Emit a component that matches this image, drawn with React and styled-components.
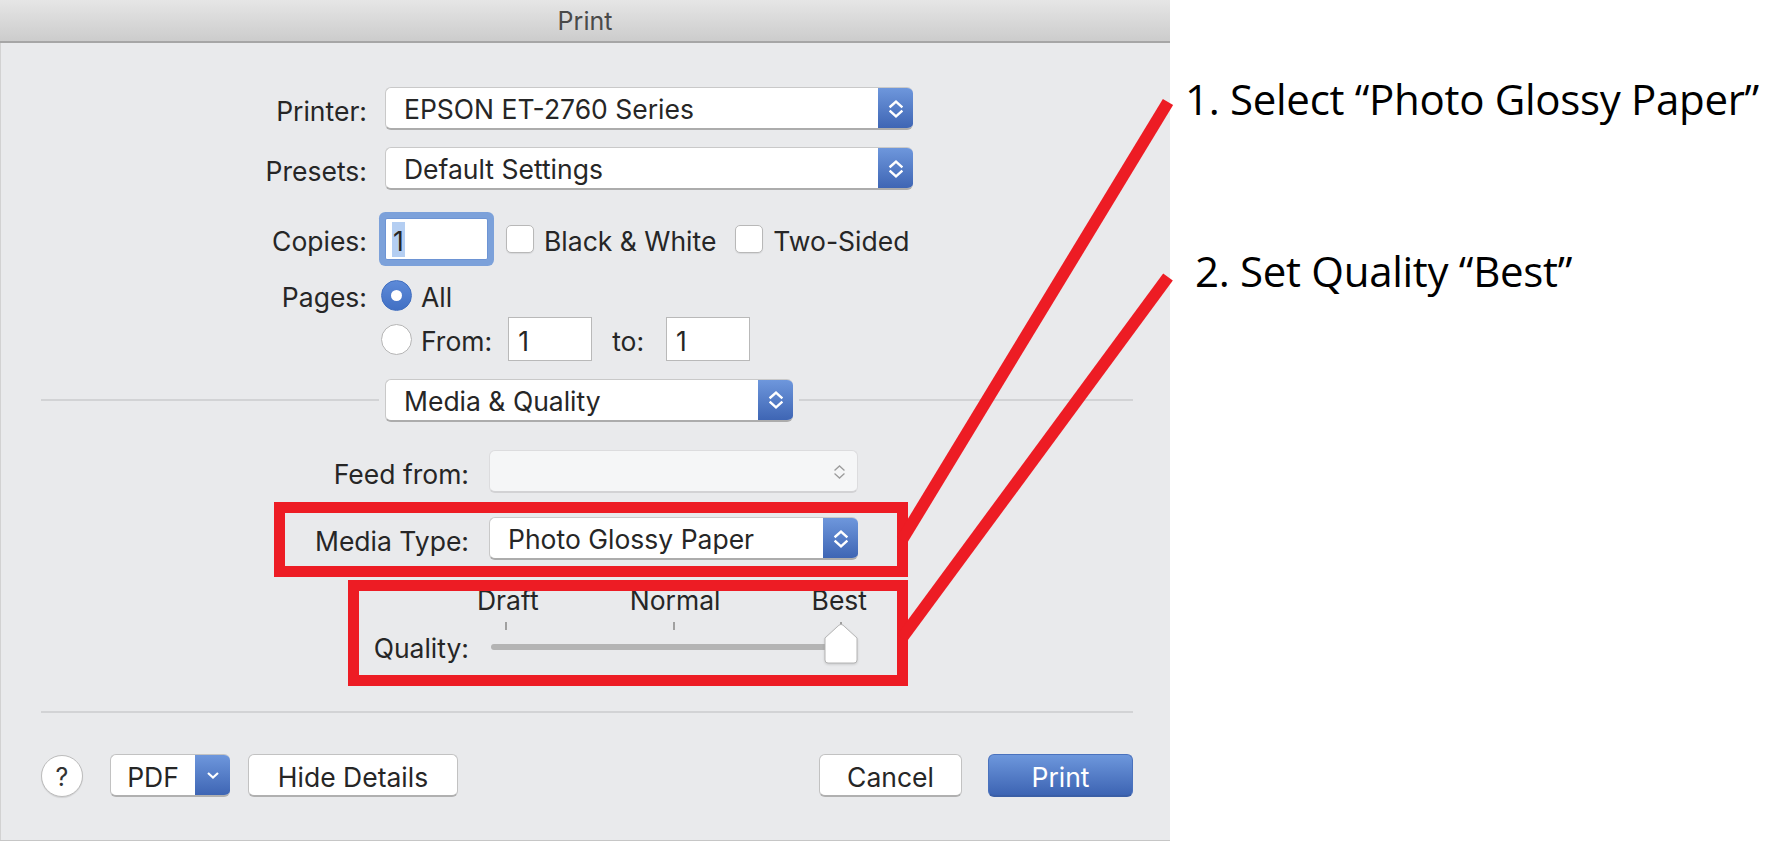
import React from 'react'
import styled, { createGlobalStyle } from 'styled-components'

// macOS print sheet with two red call-outs drawn on top of it.

const GlobalStyle = createGlobalStyle`
  html, body {
    margin: 0;
    padding: 0;
    background: #ffffff;
  }
  body {
    font-family: Inter, "Noto Sans", sans-serif;
  }
`

const RED = '#ed1c24'
const BLUE = 'linear-gradient(#6f98dd, #3c63b2)'

function UpDown({ color = '#fff', small }) {
  return (
    <svg width={small ? 13 : 16} height={small ? 22 : 22} viewBox="0 0 16 22" fill="none"
      stroke={color} strokeWidth={small ? 1.6 : 2.4} strokeLinecap="square" strokeLinejoin="miter">
      <path d="M2.5 8.5 L8 3.5 L13.5 8.5" />
      <path d="M2.5 13.5 L8 18.5 L13.5 13.5" />
    </svg>
  )
}

function ChevronDown() {
  return (
    <svg width="14" height="9" viewBox="0 0 14 9" fill="none" stroke="#fff" strokeWidth="2.2">
      <path d="M2 2 L7 6.5 L12 2" />
    </svg>
  )
}

function Popup({ width, value, disabled }) {
  return (
    <PopupBox $w={width} $disabled={disabled}>
      <PopupText>{value}</PopupText>
      <Stepper $disabled={disabled}>
        <UpDown color={disabled ? '#9c9c9c' : '#fff'} small={disabled} />
      </Stepper>
    </PopupBox>
  )
}

function App() {
  return (
    <>
      <GlobalStyle />
      <Page>
        <Dialog>
          <TitleBar>Print</TitleBar>

          <Row $label={367} $gap={18} $h={43} $top={44}>
            <Label>Printer:</Label>
            <Popup width={528} value="EPSON ET-2760 Series" />
          </Row>
          <Row $label={367} $gap={18} $h={43} $top={17}>
            <Label>Presets:</Label>
            <Popup width={528} value="Default Settings" />
          </Row>
          <Row $label={367} $gap={18} $h={42} $top={28}>
            <Label>Copies:</Label>
            <Inline>
              <FocusField>
                <Selected>1</Selected>
              </FocusField>
              <Checkbox $ml={18} />
              <Text $ml={10}>Black &amp; White</Text>
              <Checkbox $ml={19} />
              <Text $ml={10}>Two-Sided</Text>
            </Inline>
          </Row>
          <Row $label={367} $gap={14} $h={30} $top={18}>
            <Label>Pages:</Label>
            <Inline>
              <Radio $on />
              <Text $ml={9}>All</Text>
            </Inline>
          </Row>
          <Row $label={367} $gap={14} $h={44} $top={9}>
            <span />
            <Inline>
              <Radio />
              <Text $ml={9}>From:</Text>
              <Field $ml={16}>1</Field>
              <Text $ml={20}>to:</Text>
              <Field $ml={22}>1</Field>
            </Inline>
          </Row>

          <DividerRow>
            <Rule $w={338} />
            <Popup width={408} value="Media & Quality" />
            <Rule />
          </DividerRow>

          <Row $label={469} $gap={20} $h={42} $top={28}>
            <Label>Feed from:</Label>
            <Popup width={369} value="" disabled />
          </Row>
          <Row $label={469} $gap={20} $h={42} $top={25}>
            <Label>Media Type:</Label>
            <Popup width={369} value="Photo Glossy Paper" />
          </Row>
          <Row $label={469} $gap={20} $h={30} $top={26}>
            <span />
            <StopLabels>
              <span>Draft</span>
              <span>Normal</span>
              <span>Best</span>
            </StopLabels>
          </Row>
          <Row $label={469} $gap={20} $h={46} $top={4}>
            <Label $shift={8}>Quality:</Label>
            <Slider>
              <Ticks>
                <Tick />
                <Tick />
                <Tick />
              </Ticks>
              <Track />
              <Knob viewBox="0 0 34 41" width="34" height="41">
                <path d="M1 15 L15 2.2 Q17 0.6 19 2.2 L33 15 V37 Q33 40 30 40 H4 Q1 40 1 37 Z"
                  fill="#fff" stroke="#b4b4b4" strokeWidth="1" />
              </Knob>
            </Slider>
          </Row>

          <SectionRule />

          <Footer>
            <Group>
              <HelpButton>?</HelpButton>
              <PdfButton>
                <span>PDF</span>
                <PdfArrow><ChevronDown /></PdfArrow>
              </PdfButton>
              <Button $w={210} $ml={18}>Hide Details</Button>
            </Group>
            <Group>
              <Button $w={143}>Cancel</Button>
              <Button $w={145} $ml={26} $primary>Print</Button>
            </Group>
          </Footer>
        </Dialog>

        <Notes>
          <Note $pl={15} $top={75}>1. Select “Photo Glossy Paper”</Note>
          <Note $pl={25} $top={124}>2. Set Quality “Best”</Note>
        </Notes>

        <Callouts width="1768" height="843" viewBox="0 0 1768 843">
          <rect x="279.5" y="507.5" width="623" height="64" fill="none" stroke={RED} strokeWidth="11" />
          <rect x="353.5" y="585.5" width="549" height="95" fill="none" stroke={RED} strokeWidth="11" />
          <line x1="902" y1="540" x2="1168" y2="102" stroke={RED} strokeWidth="12" />
          <line x1="902" y1="638" x2="1168" y2="277" stroke={RED} strokeWidth="12" />
        </Callouts>
      </Page>
    </>
  )
}

export default App


const Page = styled.div`
  position: relative;
  display: flex;
  width: 1768px;
  height: 843px;
  overflow: hidden;
  background: #ffffff;
`

const Dialog = styled.div`
  width: 1170px;
  height: 841px;
  flex: none;
  display: flex;
  flex-direction: column;
  box-sizing: border-box;
  background: #e9eaec;
  border-bottom: 1px solid #c6c6c6;
  box-shadow: inset 1px 0 0 #d2d2d2;
  font-size: 26.5px;
  color: #262626;
`

const TitleBar = styled.div`
  height: 43px;
  flex: none;
  box-sizing: border-box;
  display: flex;
  align-items: center;
  justify-content: center;
  background: linear-gradient(#e6e6e6, #cccccc);
  border-bottom: 2px solid #a6a6a6;
  color: #4a4a4a;
  font-size: 25px;
`

const Row = styled.div`
  flex: none;
  display: grid;
  grid-template-columns: ${p => p.$label}px max-content;
  column-gap: ${p => p.$gap}px;
  align-items: center;
  height: ${p => p.$h}px;
  margin-top: ${p => p.$top}px;
`

const Label = styled.span`
  justify-self: end;
  white-space: nowrap;
  line-height: 30px;
  padding-top: 4px;
  margin-top: ${p => p.$shift || 0}px;
`

const Inline = styled.div`
  display: flex;
  align-items: center;
`

const Text = styled.span`
  margin-left: ${p => p.$ml || 0}px;
  white-space: nowrap;
  line-height: 30px;
  padding-top: 4px;
`

const PopupBox = styled.div`
  width: ${p => p.$w}px;
  height: 43px;
  box-sizing: border-box;
  display: flex;
  align-items: stretch;
  border-radius: 6px;
  overflow: hidden;
  background: ${p => (p.$disabled ? '#f5f6f7' : '#ffffff')};
  border-top: 1px solid ${p => (p.$disabled ? '#dcdcde' : '#c9c9c9')};
  border-left: 1px solid ${p => (p.$disabled ? '#dcdcde' : '#c9c9c9')};
  border-bottom: 2px solid ${p => (p.$disabled ? '#d2d2d4' : '#acacac')};
  border-right: ${p => (p.$disabled ? '1px solid #dcdcde' : 'none')};
`

const PopupText = styled.span`
  flex: 1;
  display: flex;
  align-items: center;
  padding: 2px 0 0 18px;
  white-space: nowrap;
`

const Stepper = styled.div`
  width: 35px;
  flex: none;
  display: grid;
  place-items: center;
  margin: -1px 0 -2px;
  background: ${p => (p.$disabled ? 'transparent' : BLUE)};
`

const FocusField = styled.div`
  width: 103px;
  height: 42px;
  box-sizing: border-box;
  display: flex;
  align-items: center;
  padding-left: 6px;
  background: #ffffff;
  border: 1px solid #6d94d4;
  border-radius: 2px;
  box-shadow: 0 0 0 6px #7ca1da;
`

const Selected = styled.span`
  display: inline-block;
  height: 35px;
  line-height: 38px;
  padding: 0 1px;
  background: #b4cef2;
`

const Checkbox = styled.span`
  width: 28px;
  height: 28px;
  flex: none;
  box-sizing: border-box;
  margin-left: ${p => p.$ml || 0}px;
  background: #ffffff;
  border: 1px solid #b8b8b8;
  border-radius: 5px;
  box-shadow: 0 1px 1px rgba(0, 0, 0, 0.08);
`

const Radio = styled.span`
  width: 31px;
  height: 31px;
  flex: none;
  box-sizing: border-box;
  border-radius: 50%;
  display: grid;
  place-items: center;
  background: ${p => (p.$on ? 'linear-gradient(#5d8ad8, #4170c4)' : '#ffffff')};
  border: 1px solid ${p => (p.$on ? '#416fc0' : '#b5b5b5')};

  &::after {
    content: '';
    width: 11px;
    height: 11px;
    border-radius: 50%;
    background: #ffffff;
    display: ${p => (p.$on ? 'block' : 'none')};
  }
`

const Field = styled.span`
  width: 84px;
  height: 44px;
  box-sizing: border-box;
  margin-left: ${p => p.$ml || 0}px;
  display: flex;
  align-items: center;
  padding: 3px 0 0 9px;
  background: #ffffff;
  border: 1px solid #b9b9b9;
`

const DividerRow = styled.div`
  flex: none;
  height: 44px;
  margin-top: 17px;
  padding: 0 37px 0 41px;
  display: flex;
  align-items: center;
  gap: 6px;
`

const Rule = styled.div`
  height: 2px;
  flex: ${p => (p.$w ? `0 0 ${p.$w}px` : '1')};
  background: #d2d3d5;
`

const SectionRule = styled.div`
  flex: none;
  height: 2px;
  margin: 46px 37px 0 41px;
  background: #d2d3d5;
`

const StopLabels = styled.div`
  width: 390px;
  margin-left: -12px;
  display: flex;
  justify-content: space-between;
  line-height: 30px;
`

const Slider = styled.div`
  position: relative;
  width: 367px;
  height: 46px;
  margin-left: 2px;
`

const Ticks = styled.div`
  display: flex;
  justify-content: space-between;
  padding: 3px 16px 0 14px;
`

const Tick = styled.span`
  width: 2px;
  height: 8px;
  background: #a0a0a0;
`

const Track = styled.div`
  height: 6px;
  margin: 14px 20px 0 0;
  border-radius: 3px;
  background: #b4b4b4;
`

const Knob = styled.svg`
  position: absolute;
  right: 0;
  top: 4px;
  filter: drop-shadow(0 1px 1px rgba(0, 0, 0, 0.15));
`

const Footer = styled.div`
  flex: none;
  height: 43px;
  margin-top: 41px;
  padding: 0 37px 0 41px;
  display: flex;
  align-items: center;
  justify-content: space-between;
`

const Group = styled.div`
  display: flex;
  align-items: center;
`

const HelpButton = styled.div`
  width: 42px;
  height: 42px;
  box-sizing: border-box;
  border-radius: 50%;
  display: grid;
  place-items: center;
  padding-top: 2px;
  background: #ffffff;
  border: 1px solid #bcbcbc;
  box-shadow: 0 1px 1px rgba(0, 0, 0, 0.1);
  font-size: 25px;
  color: #333;
`

const PdfButton = styled.div`
  width: 120px;
  height: 43px;
  margin-left: 27px;
  box-sizing: border-box;
  display: flex;
  align-items: stretch;
  border-radius: 6px;
  overflow: hidden;
  background: #ffffff;
  border: 1px solid #c2c2c2;
  border-right: none;
  border-bottom: 2px solid #b0b0b0;

  & > span {
    flex: 1;
    display: grid;
    place-items: center;
    padding-top: 3px;
  }
`

const PdfArrow = styled.div`
  width: 35px;
  display: grid;
  place-items: center;
  margin: -1px 0 -2px;
  background: ${BLUE};
`

const Button = styled.div`
  width: ${p => p.$w}px;
  height: 43px;
  margin-left: ${p => p.$ml || 0}px;
  box-sizing: border-box;
  display: grid;
  place-items: center;
  padding-top: 3px;
  border-radius: 6px;
  background: ${p => (p.$primary ? 'linear-gradient(#6d97dc, #3d64b3)' : '#ffffff')};
  border: 1px solid ${p => (p.$primary ? '#4a72bd' : '#c2c2c2')};
  border-bottom: 2px solid ${p => (p.$primary ? '#3a5ea6' : '#b0b0b0')};
  color: ${p => (p.$primary ? '#ffffff' : '#262626')};
`

const Notes = styled.div`
  flex: 1;
  display: flex;
  flex-direction: column;
  background: #ffffff;
  color: #000;
  font-family: "Open Sans", "Noto Sans", sans-serif;
  font-size: 42px;
  letter-spacing: -0.3px;
`

const Note = styled.div`
  padding-left: ${p => p.$pl}px;
  margin-top: ${p => p.$top}px;
  line-height: 48px;
  white-space: nowrap;
`

const Callouts = styled.svg`
  position: absolute;
  left: 0;
  top: 0;
  pointer-events: none;
`
